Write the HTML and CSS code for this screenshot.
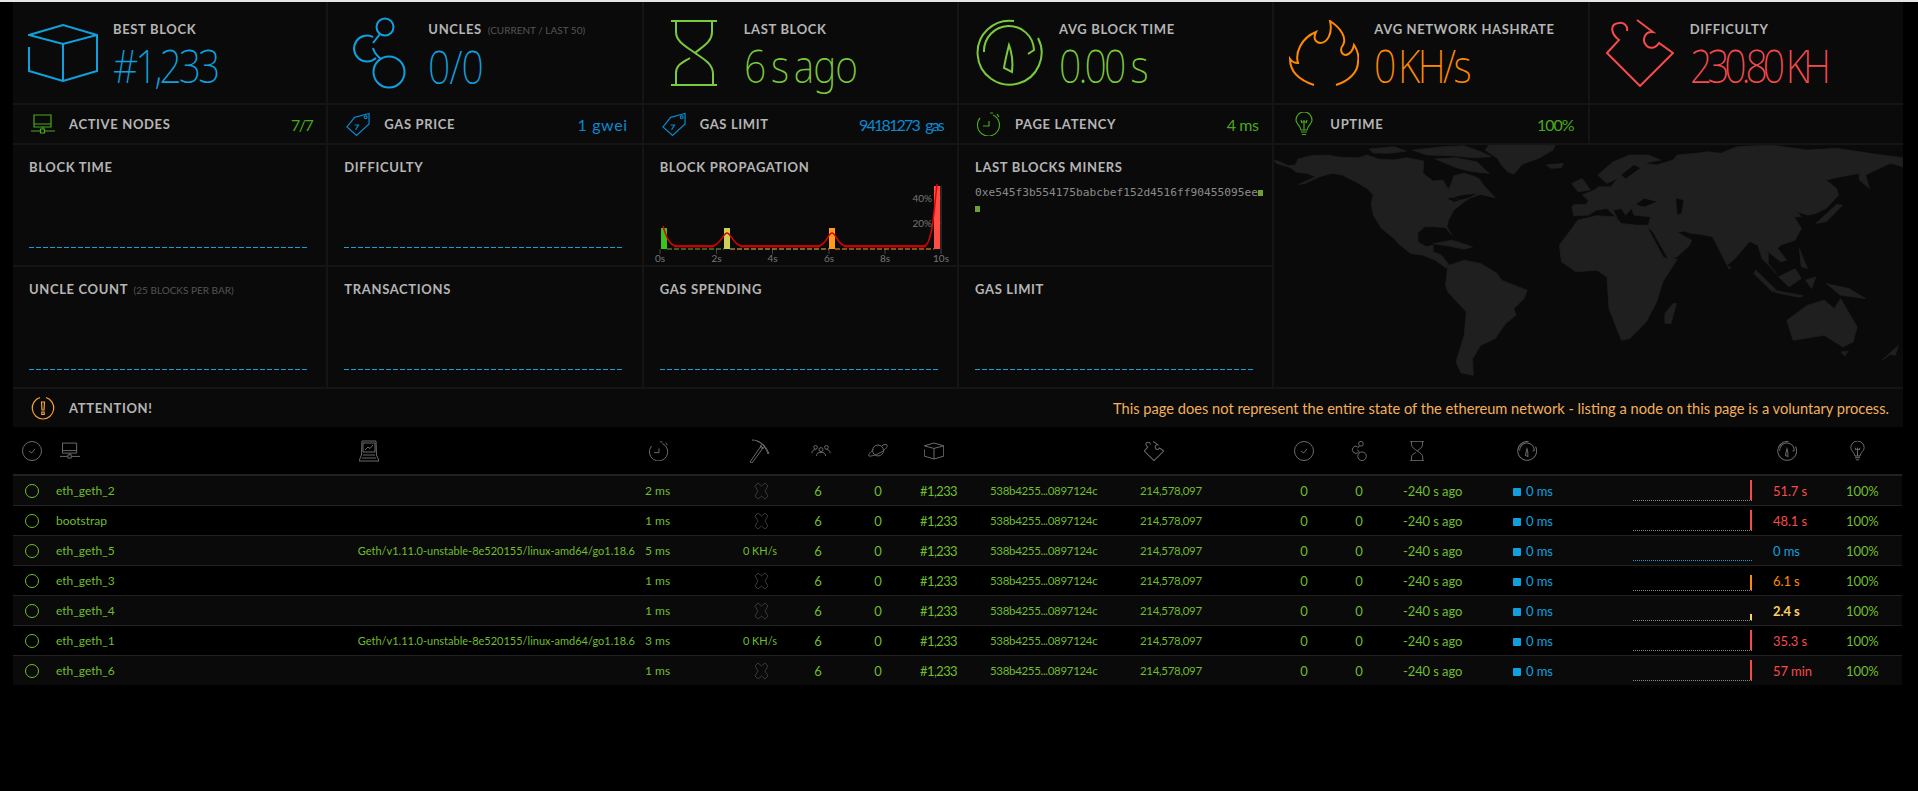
FILE: index.html
```html
<!DOCTYPE html>
<html lang="en">

<head>
  <meta charset="UTF-8" />
  <meta name="viewport" content="width=device-width, initial-scale=1.0" />
  <title>Ethereum Network Status</title>
  <link rel="stylesheet" href="styles.css">
</head>

<body>
  <svg class="defs" width="0" height="0">
    <symbol id="i-cube" viewBox="0 0 70 58"><path d="M1 11L35 1L69 11L35 20ZM35 20V57M1 23V47L35 57L69 47V11" /></symbol>
    <symbol id="i-uncles" viewBox="0 0 56 72"><circle cx="35" cy="10" r="8.5" /><circle cx="39" cy="55" r="15.5" /><path d="M23 20A13 13 0 1 0 26 41M30 17L23 26M23 31C24 35 27 39 31 42" /></symbol>
    <symbol id="i-hourglass" viewBox="0 0 46 66"><path d="M0 1H46M0 65H46M5 1V12C5 22 16 27 24 33C34 40 42 44 42 54V65M41 1V12C41 22 32 26 24 33M19 38C11 43 5 45 5 53V65" /></symbol>
    <symbol id="i-gauge" viewBox="0 0 68 68"><path d="M39 2A32 32 0 1 0 63 19M9 33A25 25 0 0 1 59 31L53 35" /><path d="M34 26C32 34 30 42 29 49L37 53C38 44 37 34 34 26Z" /></symbol>
    <symbol id="i-flame" viewBox="0 0 70 66"><path d="M25 65C10 60 1 52 1 39C3 42 6 43 9 43C6 33 12 18 27 12C24 18 26 22 31 23C38 23 44 14 41 1C52 8 58 18 54 25C50 30 53 35 57 35C61 34 64 30 65 25C69 31 70 37 69 42C69 52 60 61 47 65" /></symbol>
    <symbol id="i-puzzle" viewBox="0 0 68 68"><path d="M31 1L47 13C38 12 36 22 40 26C43 30 49 30 53 24L67 34L34 67L1 34L13 21C5 15 3 5 13 4C19 3 22 8 21 12" /></symbol>
    <symbol id="i-node" viewBox="0 0 24 21"><path d="M3 1H20V13H3ZM3 10H20M12 13V15M0 17H9M14 17H24" /><rect x="9.5" y="15" width="4" height="4" /></symbol>
    <symbol id="i-tag" viewBox="0 0 25 25"><path d="M24 1L9 5L1 15L11 24L24 12ZM9 13H13L10 18" /><circle cx="20.500" cy="5" r="1.500" /></symbol>
    <symbol id="i-clock" viewBox="0 0 24 24"><path d="M16 3A11 11 0 1 1 3 6M13 1L16 1M20 2L22 5M12 9V14H6" /></symbol>
    <symbol id="i-bulb" viewBox="0 0 18 24"><path d="M6 18C5 13 1 12 1 8A8 8 0 0 1 17 8C17 12 13 13 12 18ZM6 20H12M7 22.500H11M6 10H12M9 8V18M6 8L7 11M12 8L11 11" /></symbol>
    <symbol id="i-attention" viewBox="0 0 24 24"><path d="M15 1.500A11 11 0 0 1 12 23A11 11 0 0 1 9 1.500" /><path class="solid" d="M10.500 6H13.500L13 14H11ZM10.800 16H13.200V18.500H10.800Z" /></symbol>
    <symbol id="i-check" viewBox="0 0 20 20"><circle cx="10" cy="10" r="9.500" /><path d="M7 10L9.500 12L13 8" /></symbol>
    <symbol id="i-laptop" viewBox="0 0 20 22"><path d="M3 1H17L17.500 15L20 21H0L2.500 15ZM4 3H16V12H4ZM6 10L9 7L11 8.500L14 5M4 15H16M3 18H17" /></symbol>
    <symbol id="i-pick" viewBox="0 0 22 24"><path d="M3 1C10 1 16 6 19 15M1 23L3 24L14 9L12 7ZM8 2C14 4 18 9 20 15" /><circle cx="13.500" cy="7.500" r="2" /></symbol>
    <symbol id="i-users" viewBox="0 0 22 14"><circle cx="5" cy="3.500" r="2" /><circle cx="11" cy="6" r="2.200" /><circle cx="17" cy="3.500" r="2" /><path d="M1 10C1 7 3 6 5 6M21 10C21 7 19 6 17 6M6 13C6 10 8 9 11 9C14 9 16 10 16 13" /></symbol>
    <symbol id="i-planet" viewBox="0 0 22 16"><circle cx="11" cy="8" r="6" /><path d="M6 7C2 10 0 13 1 14C3 15 11 12 16 9C20 6 22 3 21 2C20 1 18 1 15 3" /></symbol>
    <symbol id="i-x" viewBox="0 0 15 18"><path d="M4 1L7.500 4L11 1L14 4L11 9L14 14L11 17L7.500 14L4 17L1 14L4 9L1 4Z" /></symbol>
  </svg>

  <div class="topline"></div>

  <div class="board">
    <div class="stat blue">
      <div class="stat-icon"><svg class="ic" width="70" height="58"><use href="#i-cube" /></svg></div>
      <div>
        <h4 class="title">Best Block</h4>
        <div class="big v-block">#1,233</div>
      </div>
    </div>
    <div class="stat blue">
      <div class="stat-icon"><svg class="ic" width="56" height="72"><use href="#i-uncles" /></svg></div>
      <div>
        <h4 class="title">Uncles <small>(current / last 50)</small></h4>
        <div class="big v-uncles">0/0</div>
      </div>
    </div>
    <div class="stat green">
      <div class="stat-icon"><svg class="ic" width="46" height="66"><use href="#i-hourglass" /></svg></div>
      <div>
        <h4 class="title">Last Block</h4>
        <div class="big v-last">6 s ago</div>
      </div>
    </div>
    <div class="stat green">
      <div class="stat-icon"><svg class="ic" width="68" height="68"><use href="#i-gauge" /></svg></div>
      <div>
        <h4 class="title">Avg Block Time</h4>
        <div class="big v-avg">0.00 s</div>
      </div>
    </div>
    <div class="stat orange">
      <div class="stat-icon"><svg class="ic" width="70" height="66"><use href="#i-flame" /></svg></div>
      <div>
        <h4 class="title">Avg Network Hashrate</h4>
        <div class="big v-hash">0 KH/s</div>
      </div>
    </div>
    <div class="stat red">
      <div class="stat-icon"><svg class="ic" width="68" height="68"><use href="#i-puzzle" /></svg></div>
      <div>
        <h4 class="title">Difficulty</h4>
        <div class="big v-diff">230.80 KH</div>
      </div>
    </div>

    <div class="mini dkgreen">
      <svg class="ic" width="24" height="21"><use href="#i-node" /></svg>
      <span class="title">Active Nodes</span><span class="mini-val tight-s">7/7</span>
    </div>
    <div class="mini dkblue">
      <svg class="ic" width="25" height="25"><use href="#i-tag" /></svg>
      <span class="title">Gas Price</span><span class="mini-val loose">1 gwei</span>
    </div>
    <div class="mini dkblue">
      <svg class="ic" width="25" height="25"><use href="#i-tag" /></svg>
      <span class="title">Gas Limit</span><span class="mini-val tight">94181273 gas</span>
    </div>
    <div class="mini dkgreen">
      <svg class="ic" width="24" height="24"><use href="#i-clock" /></svg>
      <span class="title">Page Latency</span><span class="mini-val">4 ms</span>
    </div>
    <div class="mini dkgreen">
      <svg class="ic" width="18" height="24"><use href="#i-bulb" /></svg>
      <span class="title">Uptime</span><span class="mini-val tight-p">100%</span>
    </div>
    <div class="mini"></div>

    <div class="chart">
      <h4 class="title">Block Time</h4>
      <div class="spark"></div>
    </div>
    <div class="chart">
      <h4 class="title">Difficulty</h4>
      <div class="spark"></div>
    </div>
    <div class="chart">
      <h4 class="title">Block Propagation</h4>
      <svg class="prop" width="300" height="84" viewBox="0 0 300 84">
        <path class="tick" d="M8 68V73M64.500 68V73M120.500 68V73M177 68V73M233 68V73M289 68V73M289 5V68M284 17H289M284 42H289" />
        <rect x="9" y="47" width="6" height="21" fill="#3cc121" />
        <rect x="72" y="47" width="6" height="21" fill="#ccd055" />
        <rect x="177" y="47" width="6" height="21" fill="#ff9a1a" />
        <rect x="282" y="5" width="6" height="63" fill="#ff4d44" />
        <path class="base" stroke="#6cb02c" d="M15 68H72" />
        <path class="base" stroke="#e8c04a" d="M78 68H177" />
        <path class="base" stroke="#ff9a1a" d="M183 68H282" />
        <path class="curve-base" d="M22 65.500H62M88 65.500H168M192 65.500H274" />
        <path class="curve" d="M11 45C14 55 17 64 24 65H60C68 65 71 52 75 52C79 52 82 65 90 65H166C174 65 176 52 180 52C184 52 186 65 194 65H272C280 65 282 30 285 3" />
        <text class="axis" x="8" y="81" text-anchor="middle">0s</text>
        <text class="axis" x="64.500" y="81" text-anchor="middle">2s</text>
        <text class="axis" x="120.500" y="81" text-anchor="middle">4s</text>
        <text class="axis" x="177" y="81" text-anchor="middle">6s</text>
        <text class="axis" x="233" y="81" text-anchor="middle">8s</text>
        <text class="axis" x="289" y="81" text-anchor="middle">10s</text>
        <text class="axis" x="280" y="21" text-anchor="end">40%</text>
        <text class="axis" x="280" y="46" text-anchor="end">20%</text>
      </svg>
    </div>
    <div class="chart">
      <h4 class="title">Last Blocks Miners</h4>
      <div class="miners"><span class="miner">0xe545f3b554175babcbef152d4516ff90455095ee</span><i class="block"></i> <i class="block"></i></div>
    </div>

    <div class="map">
      <svg width="100%" height="100%" viewBox="10 0 1520 725" preserveAspectRatio="none">
        <g class="land">
          <polygon points="10,45 25,50 45,62 62,60 68,42 100,32 140,30 172,37 215,38 235,30 262,42 300,45 330,38 372,48 370,85 395,108 418,105 432,133 440,110 445,92 470,85 490,92 505,100 520,125 545,158 510,148 485,158 470,170 445,195 432,225 428,245 440,270 425,248 400,245 375,245 358,262 358,290 378,305 395,300 395,320 415,330 435,362 425,368 400,345 370,330 340,325 310,295 280,245 305,285 270,250 250,210 245,175 250,150 235,130 210,112 175,90 150,85 120,95 85,115 70,118 110,95 90,85 65,82 50,68 15,55" />
          <polygon points="240,12 300,5 330,18 290,25 250,24" />
          <polygon points="345,15 420,5 470,2 510,20 535,35 490,38 440,32 380,30" />
          <polygon points="400,42 450,38 500,50 530,85 490,80 455,70" />
          <polygon points="530,0 690,0 685,15 650,40 610,58 590,88 575,80 560,60 550,40 520,15" />
          <polygon points="668,60 710,55 705,68 680,70" />
          <polygon points="395,296 440,285 490,305 470,312 430,302" />
          <polygon points="430,362 470,345 510,355 550,385 560,405 622,435 615,460 590,490 595,510 570,535 545,580 510,600 490,640 492,690 462,682 450,650 470,570 475,500 430,440 425,420" />
          <polygon points="700,300 730,250 745,225 790,212 835,215 850,235 885,240 915,240 950,335 985,342 950,410 935,470 910,530 870,580 850,585 820,490 815,395 790,375 740,380 705,350" />
          <polygon points="975,475 983,475 970,535 955,535 955,505" />
          <polygon points="730,185 735,178 765,178 770,165 755,150 785,135 795,125 825,125 840,100 815,115 793,90 830,50 870,30 915,30 945,45 905,55 935,60 975,45 985,30 1030,25 1060,20 1090,25 1130,5 1210,0 1300,15 1370,10 1450,25 1530,38 1530,65 1500,55 1460,78 1440,90 1450,130 1425,105 1425,85 1380,95 1345,105 1370,130 1375,150 1345,190 1320,205 1300,210 1275,200 1285,215 1268,215 1285,250 1270,285 1235,300 1228,310 1250,345 1235,350 1220,335 1205,320 1205,355 1225,385 1190,340 1180,300 1160,288 1125,340 1105,360 1085,310 1070,275 1045,268 1020,265 1000,258 985,262 1020,285 1015,300 985,335 955,345 925,265 915,240 920,215 880,210 875,190 860,210 850,190 830,195 840,220 815,190 790,195 770,210 735,212" />
          <polygon points="730,115 755,100 775,135 745,140" />
          <polygon points="1320,235 1370,178 1385,180 1345,230" />
          <polygon points="1175,375 1225,435 1215,440 1170,385" />
          <polygon points="1230,395 1270,370 1285,400 1255,425" />
          <polygon points="1220,435 1290,452 1280,456 1222,442" />
          <polygon points="1345,415 1400,430 1440,460 1380,450" />
          <polygon points="1280,310 1300,370 1285,365" />
          <polygon points="1295,405 1320,395 1310,430" />
          <polygon points="1250,525 1300,480 1340,465 1365,490 1380,460 1420,545 1410,590 1385,605 1340,570 1265,585" />
          <polygon points="1380,620 1398,618 1390,632" />
          <polygon points="1480,645 1520,600 1512,630 1500,628" />
          <polygon points="1106,362 1115,368 1110,372" />
        </g>
        <g class="water">
          <polygon points="430,160 470,150 500,145 480,158 445,170" />
          <polygon points="885,178 905,160 935,170 905,185" />
          <polygon points="982,160 1000,165 995,205 985,208" />
          <polygon points="915,250 925,260 962,340 952,335" />
          <polygon points="850,90 880,60 895,70 860,100" />
        </g>
        <g class="borders">
          <path d="M172 38V88M250 145H420L470 170M295 240L360 250M730 250H800L860 300H940M800 215L810 370M850 240V400M880 400L830 490H930M470 400L540 470L500 520M1000 120L1130 170L1300 130M1040 230L1180 300M830 130L890 180" />
        </g>
      </svg>
    </div>

    <div class="chart">
      <h4 class="title">Uncle Count <small>(25 blocks per bar)</small></h4>
      <div class="spark"></div>
    </div>
    <div class="chart">
      <h4 class="title">Transactions</h4>
      <div class="spark"></div>
    </div>
    <div class="chart">
      <h4 class="title">Gas Spending</h4>
      <div class="spark"></div>
    </div>
    <div class="chart">
      <h4 class="title">Gas Limit</h4>
      <div class="spark"></div>
    </div>

    <div class="notice">
      <svg class="ic" width="24" height="24"><use href="#i-attention" /></svg>
      <span class="title">Attention!</span>
      <span class="notice-text">This page does not represent the entire state of the ethereum network - listing a node on this page is a voluntary process.</span>
    </div>
  </div>

  <table class="nodes">
    <colgroup>
      <col class="c-status"><col class="c-node"><col class="c-client"><col class="c-lat"><col class="c-hash"><col class="c-peers"><col class="c-pend"><col class="c-block"><col class="c-bhash"><col class="c-diff"><col class="c-tx"><col class="c-unc"><col class="c-last"><col class="c-prop"><col class="c-chart"><col class="c-avg"><col class="c-up">
    </colgroup>
    <thead>
      <tr>
        <th class="ctr"><svg class="hd" width="20" height="20"><use href="#i-check" /></svg></th>
        <th><svg class="hd" width="20" height="18"><use href="#i-node" /></svg></th>
        <th><svg class="hd" width="20" height="22"><use href="#i-laptop" /></svg></th>
        <th><svg class="hd" width="20" height="20"><use href="#i-clock" /></svg></th>
        <th class="ctr"><svg class="hd" width="22" height="24"><use href="#i-pick" /></svg></th>
        <th class="shift-s"><svg class="hd" width="20" height="13"><use href="#i-users" /></svg></th>
        <th class="ctr"><svg class="hd" width="20" height="15"><use href="#i-planet" /></svg></th>
        <th><svg class="hd" width="20" height="18"><use href="#i-cube" /></svg></th>
        <th></th>
        <th><svg class="hd" width="20" height="20"><use href="#i-puzzle" /></svg></th>
        <th class="ctr"><svg class="hd" width="20" height="20"><use href="#i-check" /></svg></th>
        <th class="ctr"><svg class="hd" width="16" height="20"><use href="#i-uncles" /></svg></th>
        <th class="shift-l"><svg class="hd" width="14" height="20"><use href="#i-hourglass" /></svg></th>
        <th><svg class="hd" width="20" height="20"><use href="#i-gauge" /></svg></th>
        <th></th>
        <th><svg class="hd" width="20" height="20"><use href="#i-gauge" /></svg></th>
        <th><svg class="hd" width="15" height="20"><use href="#i-bulb" /></svg></th>
      </tr>
    </thead>
    <tbody>
      <tr>
        <td class="ctr"><i class="dot"></i></td><td class="sm">eth_geth_2</td><td class="client"></td><td class="sm">2 ms</td><td class="ctr"><svg class="none" width="15" height="18"><use href="#i-x" /></svg></td><td class="ctr">6</td><td class="ctr">0</td><td class="tight-n">#1,233</td><td class="xs">538b4255...0897124c</td><td class="xs">214,578,097</td><td class="ctr">0</td><td class="ctr">0</td><td class="ago">-240 s ago</td><td class="prop-time"><i class="sq"></i>0 ms</td><td><div class="lat-chart"><i class="bar bg-red h20"></i></div></td><td class="red">51.7 s</td><td>100%</td>
      </tr>
      <tr>
        <td class="ctr"><i class="dot"></i></td><td class="sm">bootstrap</td><td class="client"></td><td class="sm">1 ms</td><td class="ctr"><svg class="none" width="15" height="18"><use href="#i-x" /></svg></td><td class="ctr">6</td><td class="ctr">0</td><td class="tight-n">#1,233</td><td class="xs">538b4255...0897124c</td><td class="xs">214,578,097</td><td class="ctr">0</td><td class="ctr">0</td><td class="ago">-240 s ago</td><td class="prop-time"><i class="sq"></i>0 ms</td><td><div class="lat-chart"><i class="bar bg-red h20"></i></div></td><td class="red">48.1 s</td><td>100%</td>
      </tr>
      <tr>
        <td class="ctr"><i class="dot"></i></td><td class="sm">eth_geth_5</td><td class="client">Geth/v1.11.0-unstable-8e520155/linux-amd64/go1.18.6</td><td class="sm">5 ms</td><td class="ctr small">0 KH/s</td><td class="ctr">6</td><td class="ctr">0</td><td class="tight-n">#1,233</td><td class="xs">538b4255...0897124c</td><td class="xs">214,578,097</td><td class="ctr">0</td><td class="ctr">0</td><td class="ago">-240 s ago</td><td class="prop-time"><i class="sq"></i>0 ms</td><td><div class="lat-chart lat-blue"></div></td><td class="blue">0 ms</td><td>100%</td>
      </tr>
      <tr>
        <td class="ctr"><i class="dot"></i></td><td class="sm">eth_geth_3</td><td class="client"></td><td class="sm">1 ms</td><td class="ctr"><svg class="none" width="15" height="18"><use href="#i-x" /></svg></td><td class="ctr">6</td><td class="ctr">0</td><td class="tight-n">#1,233</td><td class="xs">538b4255...0897124c</td><td class="xs">214,578,097</td><td class="ctr">0</td><td class="ctr">0</td><td class="ago">-240 s ago</td><td class="prop-time"><i class="sq"></i>0 ms</td><td><div class="lat-chart"><i class="bar bg-orange h15"></i></div></td><td class="orange">6.1 s</td><td>100%</td>
      </tr>
      <tr>
        <td class="ctr"><i class="dot"></i></td><td class="sm">eth_geth_4</td><td class="client"></td><td class="sm">1 ms</td><td class="ctr"><svg class="none" width="15" height="18"><use href="#i-x" /></svg></td><td class="ctr">6</td><td class="ctr">0</td><td class="tight-n">#1,233</td><td class="xs">538b4255...0897124c</td><td class="xs">214,578,097</td><td class="ctr">0</td><td class="ctr">0</td><td class="ago">-240 s ago</td><td class="prop-time"><i class="sq"></i>0 ms</td><td><div class="lat-chart"><i class="bar bg-yellow h6"></i></div></td><td class="yellow">2.4 s</td><td>100%</td>
      </tr>
      <tr>
        <td class="ctr"><i class="dot"></i></td><td class="sm">eth_geth_1</td><td class="client">Geth/v1.11.0-unstable-8e520155/linux-amd64/go1.18.6</td><td class="sm">3 ms</td><td class="ctr small">0 KH/s</td><td class="ctr">6</td><td class="ctr">0</td><td class="tight-n">#1,233</td><td class="xs">538b4255...0897124c</td><td class="xs">214,578,097</td><td class="ctr">0</td><td class="ctr">0</td><td class="ago">-240 s ago</td><td class="prop-time"><i class="sq"></i>0 ms</td><td><div class="lat-chart"><i class="bar bg-red h20"></i></div></td><td class="red">35.3 s</td><td>100%</td>
      </tr>
      <tr>
        <td class="ctr"><i class="dot"></i></td><td class="sm">eth_geth_6</td><td class="client"></td><td class="sm">1 ms</td><td class="ctr"><svg class="none" width="15" height="18"><use href="#i-x" /></svg></td><td class="ctr">6</td><td class="ctr">0</td><td class="tight-n">#1,233</td><td class="xs">538b4255...0897124c</td><td class="xs">214,578,097</td><td class="ctr">0</td><td class="ctr">0</td><td class="ago">-240 s ago</td><td class="prop-time"><i class="sq"></i>0 ms</td><td><div class="lat-chart"><i class="bar bg-red h20"></i></div></td><td class="red">57 min</td><td>100%</td>
      </tr>
    </tbody>
  </table>
</body>

</html>
```
FILE: styles.css
```css
body {
  margin: 0;
  background: #000;
  font-family: Lato, "Noto Sans", sans-serif;
  color: #6fbe2c;
}

.defs {
  position: absolute;
}

symbol * {
  vector-effect: non-scaling-stroke;
}

.topline {
  height: 2px;
  background: #e6e6e6;
}

.blue {
  color: #10a0de;
}

.green {
  color: #7bc93c;
}

.orange {
  color: #ff8a00;
}

.red {
  color: #f74b4b;
}

.yellow {
  color: #ffd162;
  font-weight: 700;
}

.dkgreen {
  color: #49a91c;
}

.dkblue {
  color: #0b88cf;
}

.ic {
  fill: none;
  stroke: currentColor;
  stroke-width: 2;
  flex: none;
}

.board {
  display: grid;
  grid-template-columns: repeat(6, minmax(0, 1fr));
  grid-template-rows: 101px 38px 120px 120px 38px;
  gap: 2px;
  width: 1890px;
  margin-left: 13px;
  background: #151515;
}

.title {
  margin: 0;
  font-size: 13px;
  line-height: 14px;
  font-weight: 700;
  letter-spacing: 0.65px;
  text-transform: uppercase;
  color: #b5b5b5;
}

.title small {
  font-size: 10px;
  font-weight: 400;
  letter-spacing: 0;
  color: #555;
  margin-left: 2px;
}

.stat {
  display: flex;
  background: #0a0a0a;
}

.stat-icon {
  width: 100px;
  display: flex;
  align-items: center;
  justify-content: center;
  flex: none;
}

.stat .title {
  margin-top: 20px;
}

/* Noto is wider than the narrow face this should be, so squeeze it */
.big {
  display: inline-block;
  font-family: "Noto Sans", sans-serif;
  font-weight: 200;
  font-size: 46px;
  line-height: 52px;
  margin-top: 3px;
  white-space: nowrap;
  transform: scaleX(0.85);
  transform-origin: 0 50%;
}

.v-block {
  letter-spacing: -3.5px;
}

.v-uncles {
  letter-spacing: -1px;
}

.v-last {
  letter-spacing: -1.2px;
  word-spacing: -4px;
}

.v-avg {
  letter-spacing: -3.4px;
}

.v-hash {
  letter-spacing: -3px;
  word-spacing: -4px;
}

.v-diff {
  letter-spacing: -6px;
  word-spacing: 1px;
}

.mini {
  display: flex;
  align-items: center;
  gap: 14px;
  padding: 0 14px 0 18px;
  background: #0a0a0a;
}

.mini .ic {
  stroke-width: 1.2;
  width: 24px;
}

.mini-val {
  margin-left: auto;
  font-size: 16px;
  letter-spacing: -0.5px;
}

.mini-val.tight-s {
  letter-spacing: -1.5px;
}

.mini-val.tight-p {
  letter-spacing: -1px;
}

.mini-val.tight {
  letter-spacing: -1.8px;
  word-spacing: 4px;
}

.mini-val.loose {
  letter-spacing: 0.6px;
}

.chart {
  display: flex;
  flex-direction: column;
  padding: 15px 16px 17px;
  background: #0a0a0a;
}

.spark {
  height: 1px;
  width: 279px;
  margin-top: auto;
  background: repeating-linear-gradient(90deg, #10a0de 0 5px, transparent 5px 7px);
}

.prop {
  flex: none;
  margin: 7px 0 0 -8px;
}

.tick {
  fill: none;
  stroke: #444;
}

.base {
  fill: none;
  stroke-dasharray: 5 2;
}

.curve {
  fill: none;
  stroke: #e00000;
  stroke-width: 1.5;
}

.curve-base {
  fill: none;
  stroke: #a00000;
  stroke-width: 2;
}

.axis {
  font-size: 10px;
  fill: #777;
}

.miners {
  width: 292px;
  margin-top: 11px;
  font-size: 0;
  line-height: 16px;
}

.miner {
  font-family: "DejaVu Sans Mono", monospace;
  font-size: 11.2px;
  color: #8a8a8a;
}

.block {
  display: inline-block;
  width: 5px;
  height: 6px;
  background: #6ca035;
  font-size: 12px;
}

.map {
  grid-column: 5 / 7;
  grid-row: 3 / 5;
  background: #0a0a0a;
  overflow: hidden;
}

.map svg {
  display: block;
}

.land {
  fill: #1f1f1f;
  stroke: #1f1f1f;
  stroke-linejoin: round;
  stroke-width: 2;
}

.water {
  fill: #0a0a0a;
}

.borders {
  fill: none;
  stroke: #272727;
}

.notice {
  grid-column: 1 / 7;
  display: flex;
  align-items: center;
  gap: 14px;
  padding: 0 14px 0 18px;
  background: #0a0a0a;
  color: #f6a13b;
}

.notice .ic {
  stroke-width: 1.2;
}

.notice .solid {
  fill: currentColor;
  stroke: none;
}

.notice-text {
  margin-left: auto;
  font-size: 14.65px;
  color: #f2b05c;
}

.nodes {
  width: 1889px;
  margin-left: 13px;
  table-layout: fixed;
  border-collapse: collapse;
  font-size: 13px;
  letter-spacing: -0.1px;
}

.c-status { width: 38px; }
.c-node { width: 299px; }
.c-client { width: 290px; }
.c-lat { width: 85px; }
.c-hash { width: 70px; }
.c-peers { width: 46px; }
.c-pend { width: 74px; }
.c-block { width: 70px; }
.c-bhash { width: 150px; }
.c-diff { width: 140px; }
.c-tx { width: 58px; }
.c-unc { width: 52px; }
.c-last { width: 123px; }
.c-prop { width: 120px; }
.c-chart { width: 140px; }
.c-avg { width: 73px; }
.c-up { width: 61px; }

th {
  height: 47px;
  padding: 0 0 0 9px;
  text-align: left;
  border-bottom: 2px solid #222;
}

th.ctr {
  padding: 0;
  text-align: center;
}

th.shift-s {
  padding-left: 16px;
}

th.shift-l {
  padding-left: 25px;
}

.hd {
  display: block;
  fill: none;
  stroke: #6a6a6a;
  stroke-width: 1;
}

.ctr .hd {
  margin: 0 auto;
}

td {
  height: 29px;
  padding: 0 5px;
  border-bottom: 1px solid #222;
  white-space: nowrap;
}

tbody tr:nth-child(odd) {
  background: #0a0a0a;
}

tbody tr:last-child td {
  border-bottom: 0;
}

td.ctr {
  text-align: center;
}

.sm {
  font-size: 12px;
  letter-spacing: 0;
}

.xs {
  font-size: 11.5px;
  letter-spacing: -0.32px;
}

.tight-n {
  letter-spacing: -0.6px;
}

.client {
  text-align: right;
  font-size: 11px;
  letter-spacing: 0;
}

.small {
  font-size: 11px;
  letter-spacing: 0;
}

.ago {
  padding-left: 18px;
}

.dot {
  display: block;
  width: 12px;
  height: 12px;
  margin: 0 auto;
  border: 1px solid #6fbe2c;
  border-radius: 50%;
}

.none {
  display: block;
  margin: 0 auto 0 24px;
  fill: none;
  stroke: #383838;
}

.prop-time {
  color: #10a0de;
}

.sq {
  display: inline-block;
  width: 8px;
  height: 8px;
  margin-right: 5px;
  border-radius: 1px;
  background: #10a0de;
}

.lat-chart {
  display: flex;
  justify-content: flex-end;
  align-items: flex-end;
  width: 119px;
  height: 20px;
  border-bottom: 1px dotted #888;
}

.lat-blue {
  border-bottom-color: #10a0de;
}

.bar {
  display: block;
  width: 2px;
}

.bg-red { background: #f74b4b; }
.bg-orange { background: #ff8a00; }
.bg-yellow { background: #ffd162; }
.h20 { height: 20px; }
.h15 { height: 15px; }
.h6 { height: 6px; }
```
